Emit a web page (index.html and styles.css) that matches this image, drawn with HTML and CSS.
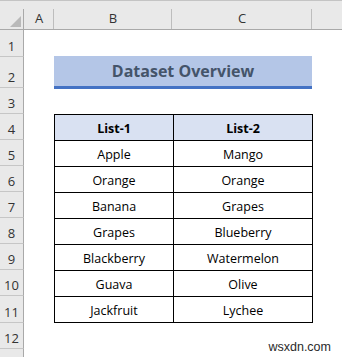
FILE: index.html
```html
<!DOCTYPE html>
<html>
<head>
<meta charset="utf-8">
<link rel="stylesheet" href="styles.css">
</head>
<body>
<div class="sheet">
  <div class="ch corner"><svg width="11" height="11" viewBox="0 0 11 11"><polygon points="11,0 11,11 0,11" fill="#b9b9b9"/></svg></div>
  <div class="ch">A</div>
  <div class="ch">B</div>
  <div class="ch">C</div>
  <div class="ch last"></div>

  <div class="rh">1</div>
  <div class="rh">2</div>
  <div class="rh">3</div>
  <div class="rh">4</div>
  <div class="rh">5</div>
  <div class="rh">6</div>
  <div class="rh">7</div>
  <div class="rh">8</div>
  <div class="rh">9</div>
  <div class="rh">10</div>
  <div class="rh">11</div>
  <div class="rh">12</div>
  <div class="rh"></div>

  <div class="title">Dataset Overview</div>

  <table class="data">
    <thead>
      <tr><th>List-1</th><th>List-2</th></tr>
    </thead>
    <tbody>
      <tr><td>Apple</td><td>Mango</td></tr>
      <tr><td>Orange</td><td>Orange</td></tr>
      <tr><td>Banana</td><td>Grapes</td></tr>
      <tr><td>Grapes</td><td>Blueberry</td></tr>
      <tr><td>Blackberry</td><td>Watermelon</td></tr>
      <tr><td>Guava</td><td>Olive</td></tr>
      <tr><td>Jackfruit</td><td>Lychee</td></tr>
    </tbody>
  </table>

  <div class="mark">wsxdn.com</div>
</div>
</body>
</html>
```

FILE: styles.css
```css
html, body {
  margin: 0;
  padding: 0;
  background: #fff;
}
.sheet {
  position: relative;
  width: 342px;
  height: 357px;
  overflow: hidden;
  display: grid;
  grid-template-columns: 24px 30px 118px 140px 1fr;
  grid-template-rows: 30px 27px 31px 26px 26px 26px 26px 26px 26px 26px 26px 27px 26px 30px;
  font-family: "Open Sans", "Liberation Sans", sans-serif;
  color: #000;
}
.ch {
  grid-row: 1;
  box-sizing: border-box;
  border-top: 1px solid #c4c4c4;
  border-bottom: 1px solid #a9a9a9;
  background: linear-gradient(#bdbdbd, #bdbdbd) right bottom / 1px 20px no-repeat, #e9e9e9;
  display: flex;
  align-items: flex-end;
  justify-content: center;
  padding-bottom: 4px;
  font-size: 13px;
  line-height: 14px;
  color: #333;
}
.ch.last {
  background: #e9e9e9;
}
.corner {
  justify-content: flex-end;
  padding: 0 3px 2px 0;
  background: linear-gradient(#a9a9a9, #a9a9a9) right bottom / 1px 20px no-repeat, #e9e9e9;
}
.rh {
  grid-column: 1;
  box-sizing: border-box;
  background: #e9e9e9;
  border-right: 1px solid #a9a9a9;
  border-bottom: 1px solid #c6c6c6;
  display: flex;
  align-items: flex-end;
  justify-content: center;
  padding-bottom: 3px;
  font-size: 13px;
  line-height: 14px;
  color: #333;
}
.title {
  grid-row: 3;
  grid-column: 3 / 5;
  margin-top: -1px;
  height: 30px;
  background: #b4c6e7;
  border-bottom: 3px solid #4472c4;
  display: flex;
  align-items: center;
  justify-content: center;
  font-weight: 700;
  font-size: 16px;
  color: #44546a;
}
.data {
  grid-row: 5 / 13;
  grid-column: 3 / 5;
  align-self: start;
  border-collapse: collapse;
  width: 259px;
  table-layout: fixed;
  font-size: 12.5px;
}
.data tr {
  height: 26px;
}
.data th, .data td {
  border: 1px solid #000;
  padding: 2px 0 0;
  text-align: center;
  vertical-align: middle;
  line-height: 16px;
}
.data th:first-child, .data td:first-child {
  width: 118px;
}
.data th {
  background: #d9e1f2;
  font-weight: 700;
}
.mark {
  position: absolute;
  right: 11px;
  bottom: 3px;
  font-family: "Liberation Sans", Arial, sans-serif;
  font-size: 12.5px;
  color: #2a2a2a;
}
```
